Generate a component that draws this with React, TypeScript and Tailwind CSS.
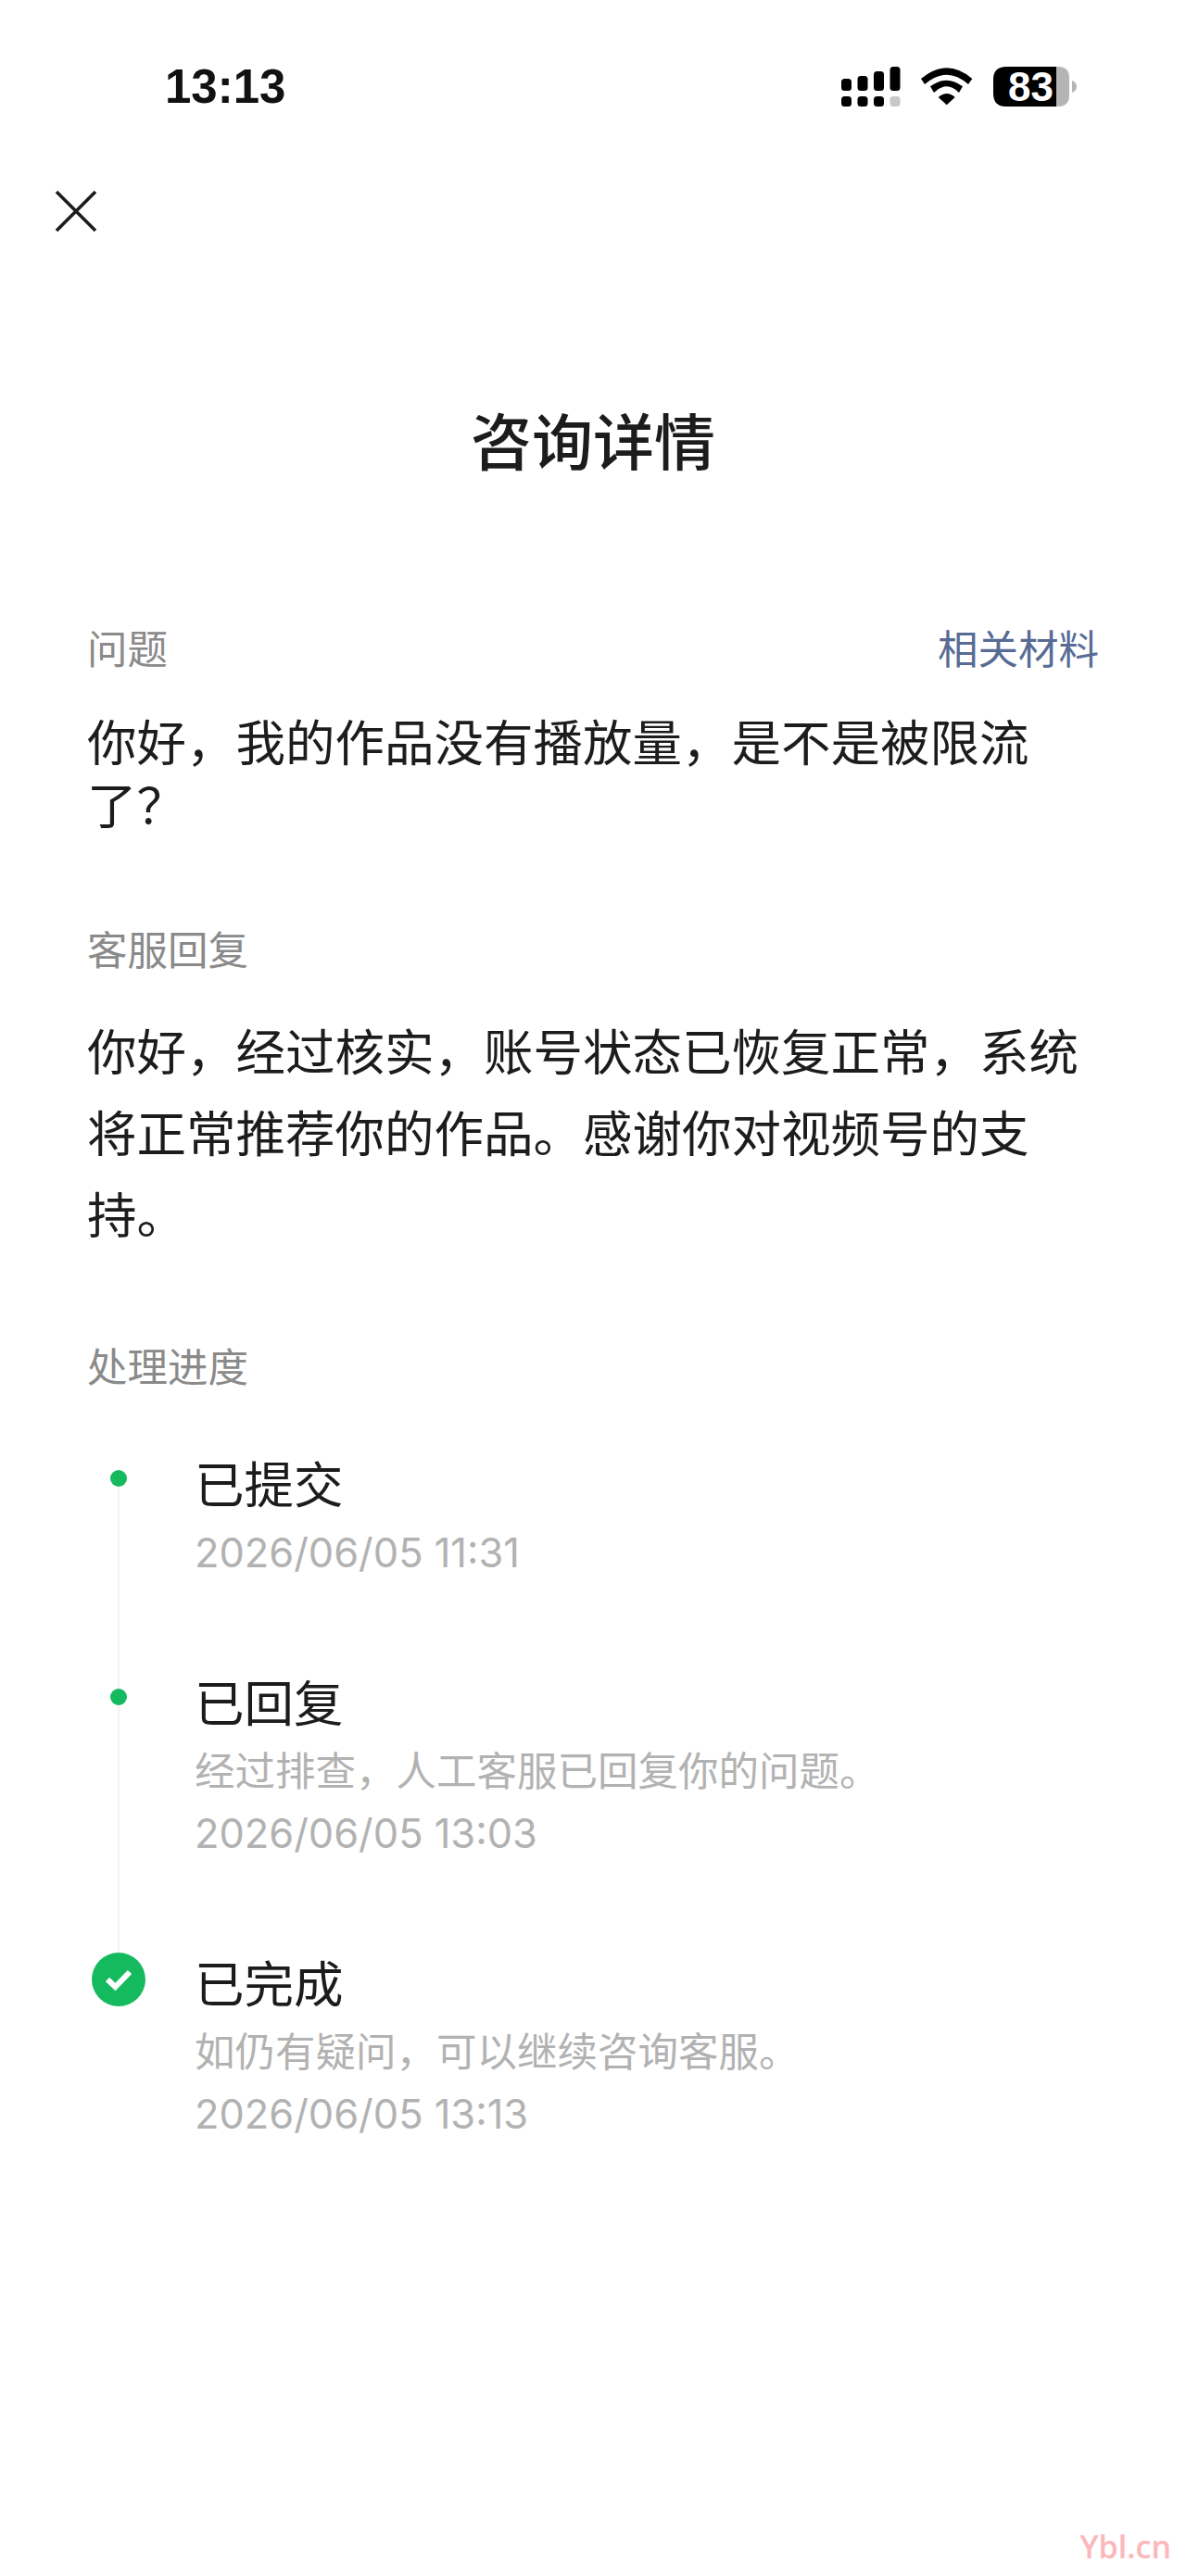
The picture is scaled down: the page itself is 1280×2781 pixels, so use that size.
const CJK = "font-['Liberation_Sans','Noto_Sans_CJK_SC',sans-serif]";
const NUM = "font-['Inter','Noto_Sans_CJK_SC',sans-serif]";

function StatusIcons() {
  return (
    <svg width="254" height="44" viewBox="0 0 254 44" className="block">
      <g fill="#000">
        <rect x="0" y="13" width="11" height="13" rx="3.5" />
        <rect x="17.5" y="10" width="11" height="16" rx="3.5" />
        <rect x="35" y="5" width="11" height="21" rx="3.5" />
        <rect x="52.5" y="0" width="11" height="26" rx="3.5" />
        <rect x="0" y="32" width="11" height="11" rx="3.5" />
        <rect x="17.5" y="32" width="11" height="11" rx="3.5" />
        <rect x="35" y="32" width="11" height="11" rx="3.5" />
        <rect x="52.5" y="32" width="11" height="11" rx="3.5" fill="#c8c8c8" />
        <path d="M86 13 Q113.7 -10.4 141.3 13 L137 19 Q113.7 -1.6 90 19 Z" />
        <path d="M96 21.3 Q113.7 8 131 21.3 L127 28 Q113.7 14.6 100 28 Z" />
        <path d="M104.7 33 Q113.7 25 122.7 33 L113.7 41.3 Z" />
      </g>
      <path d="M178 0 L232 0 L232 43 L178 43 Q164 43 164 29 L164 14 Q164 0 178 0 Z" fill="#000" />
      <path d="M232 0 L234 0 Q246 0 246 12 L246 31 Q246 43 234 43 L232 43 Z" fill="#b5b5b5" />
      <path d="M249 15 Q254 17 254 21.5 Q254 26 249 28 Z" fill="#b5b5b5" />
    </svg>
  );
}

function Step({ title, desc, time, tail, done }: { title: string; desc?: string; time: string; tail: boolean; done?: boolean }) {
  return (
    <div className="flex">
      <div className="relative w-[116px] shrink-0">
        {done ? (
          <div className="absolute left-[5px] top-[-6px] flex h-[58px] w-[58px] items-center justify-center rounded-full bg-[#15ba5f]">
            <svg width="32" height="26" viewBox="0 0 32 26" fill="none">
              <path d="M4 13 L12.5 21 L28 5" stroke="#fff" strokeWidth="6" />
            </svg>
          </div>
        ) : (
          <div className="absolute left-[25px] top-[12px] h-[18px] w-[18px] rounded-full bg-[#15ba5f]" />
        )}
        {tail && <div className="absolute left-[33px] top-[30px] bottom-[-120px] w-[2px] bg-[#f1f1f1]" />}
      </div>
      <div>
        <div className="text-[53.5px] leading-[60px] text-[#1c1c1c]">{title}</div>
        {desc && <div className="mt-[12px] text-[43.5px] leading-[60px] text-[#b2b2b2]">{desc}</div>}
        <div className={`${NUM} text-[43.4px] leading-[60px] text-[#b2b2b2] ${desc ? "mt-[6px]" : "mt-[11px]"}`}>{time}</div>
      </div>
    </div>
  );
}

export default function App() {
  return (
    <div className={`relative h-[2781px] w-[1280px] overflow-hidden bg-white ${CJK}`}>
      <div className="flex h-[123px] items-start justify-between pl-[178px] pr-[118px]">
        <div className="mt-[65px] text-[51px] font-semibold leading-[58px] text-[#111]">13:13</div>
        <div className="relative mt-[72px]">
          <StatusIcons />
          <span className="absolute left-[180px] top-[-3px] text-[44px] font-bold leading-[50px] text-white">83</span>
        </div>
      </div>
      <div className="pl-[59px] pt-[82px]">
        <svg width="46" height="46" viewBox="0 0 46 46" fill="none" className="block">
          <path d="M2 2 L44 44 M44 2 L2 44" stroke="#1c1c1c" strokeWidth="3.6" />
        </svg>
      </div>
      <h1 className="mt-[183px] text-center text-[66px] font-medium leading-[90px] text-[#1c1c1c]">咨询详情</h1>
      <div className="px-[94px]">
        <div className="mt-[148px] flex items-center justify-between">
          <span className="text-[43.5px] leading-[60px] text-[#8a8a8a]">问题</span>
          <span className="text-[43.5px] leading-[60px] text-[#576b95]">相关材料</span>
        </div>
        <p className="mt-[38px] w-[1080px] text-[53.5px] leading-[68px] text-[#1c1c1c]">你好，我的作品没有播放量，是不是被限流了？</p>
        <div className="mt-[91px] text-[43.5px] leading-[60px] text-[#8a8a8a]">客服回复</div>
        <p className="mt-[37px] w-[1080px] text-[53.5px] leading-[88px] text-[#1c1c1c]">你好，经过核实，账号状态已恢复正常，系统将正常推荐你的作品。感谢你对视频号的支持。</p>
        <div className="mt-[89px] text-[43.5px] leading-[60px] text-[#8a8a8a]">处理进度</div>
        <div className="mt-[68px] flex flex-col gap-[105px]">
          <Step title="已提交" time="2026/06/05 11:31" tail />
          <Step title="已回复" desc="经过排查，人工客服已回复你的问题。" time="2026/06/05 13:03" tail />
          <Step title="已完成" desc="如仍有疑问，可以继续咨询客服。" time="2026/06/05 13:13" tail={false} done />
        </div>
      </div>
      <div className="absolute bottom-[12px] right-[16px] font-['Open_Sans',sans-serif] text-[34px] font-semibold leading-[40px] text-[#fbb7bb]">Ybl.cn</div>
    </div>
  );
}
